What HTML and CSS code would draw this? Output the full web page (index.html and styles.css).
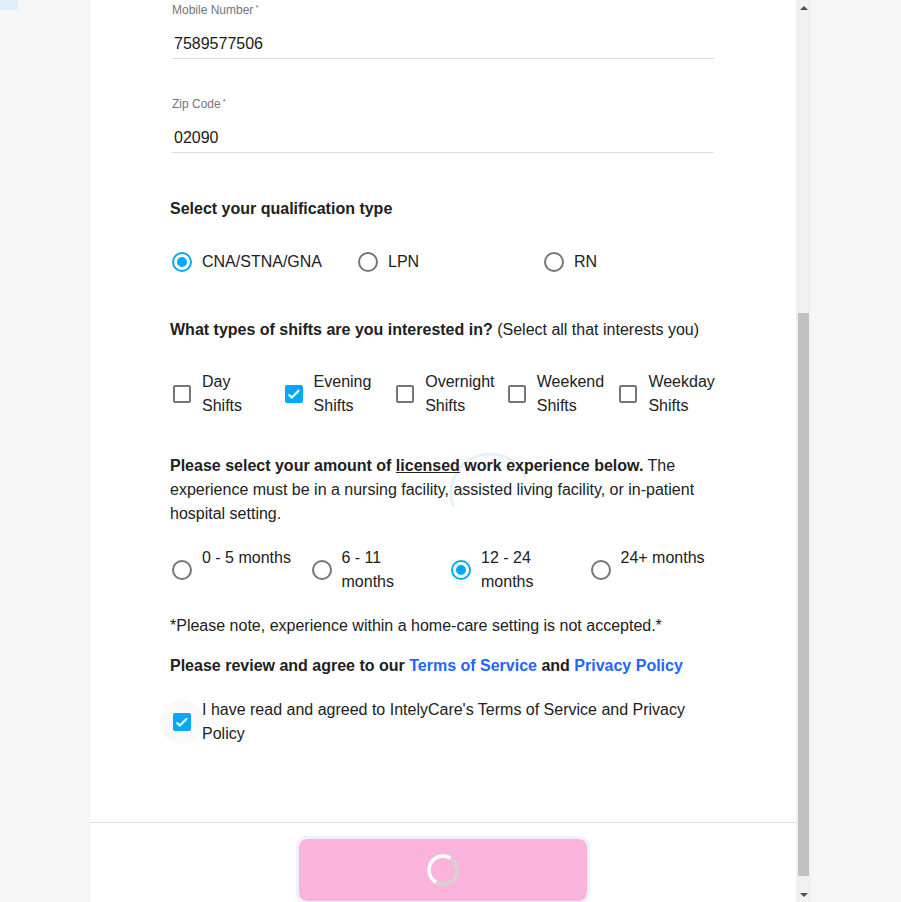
FILE: index.html
```html
<!DOCTYPE html>
<html lang="en">
<head>
<meta charset="utf-8">
<title>Sign up</title>
<link rel="stylesheet" href="styles.css">
</head>
<body>
<div class="page">
  <aside class="gutter"><div class="corner-tab"></div></aside>

  <main class="panel">
    <svg class="busy-arc" width="84" height="84" viewBox="0 0 84 84" aria-hidden="true">
      <circle cx="42" cy="42" r="39" fill="none" stroke="#e2f1fc" stroke-width="3" stroke-dasharray="120 200" transform="rotate(160 42 42)"/>
    </svg>

    <form class="form">
      <div class="content">
        <div class="field">
          <div class="field-label">Mobile Number<span class="req">*</span></div>
          <div class="field-value">7589577506</div>
        </div>
        <div class="field field-next">
          <div class="field-label">Zip Code<span class="req">*</span></div>
          <div class="field-value">02090</div>
        </div>

        <h3 class="q q-first">Select your qualification type</h3>
        <div class="radio-row">
          <label class="opt"><span class="radio on"></span><span>CNA/STNA/GNA</span></label>
          <label class="opt"><span class="radio"></span><span>LPN</span></label>
          <label class="opt"><span class="radio"></span><span>RN</span></label>
        </div>

        <h3 class="q q-shifts">What types of shifts are you interested in? <span class="normal">(Select all that interests you)</span></h3>
        <div class="shift-row">
          <label class="opt two"><span class="check"></span><span class="shift-text">Day Shifts</span></label>
          <label class="opt two"><span class="check on"><svg width="14" height="14" viewBox="0 0 14 14"><polyline points="1.6,7.4 4.8,10.6 12.2,3.2" fill="none" stroke="#fff" stroke-width="2.1"/></svg></span><span class="shift-text">Evening Shifts</span></label>
          <label class="opt two"><span class="check"></span><span class="shift-text">Overnight Shifts</span></label>
          <label class="opt two"><span class="check"></span><span class="shift-text">Weekend Shifts</span></label>
          <label class="opt two"><span class="check"></span><span class="shift-text">Weekday Shifts</span></label>
        </div>

        <p class="para"><b>Please select your amount of <u>licensed</u> work experience below.</b> The experience must be in a nursing facility, assisted living facility, or in-patient hospital setting.</p>
        <div class="exp-row">
          <label class="opt two"><span class="radio"></span><span class="exp-text">0 - 5 months</span></label>
          <label class="opt two"><span class="radio"></span><span class="exp-text">6 - 11 months</span></label>
          <label class="opt two"><span class="radio on"></span><span class="exp-text">12 - 24 months</span></label>
          <label class="opt two"><span class="radio"></span><span class="exp-text">24+ months</span></label>
        </div>

        <p class="note">*Please note, experience within a home-care setting is not accepted.*</p>
        <p class="q q-review">Please review and agree to our <a class="link" href="#">Terms of Service</a> and <a class="link" href="#">Privacy Policy</a></p>

        <label class="terms">
          <span class="terms-box"><span class="halo"></span><span class="check on"><svg width="14" height="14" viewBox="0 0 14 14"><polyline points="1.6,7.4 4.8,10.6 12.2,3.2" fill="none" stroke="#fff" stroke-width="2.1"/></svg></span></span>
          <span class="terms-text">I have read and agreed to IntelyCare's Terms of Service and Privacy Policy</span>
        </label>
      </div>
    </form>

    <div class="footer">
      <button class="submit" type="button" aria-label="Loading">
        <svg width="34" height="34" viewBox="0 0 34 34" aria-hidden="true">
          <circle cx="17" cy="17" r="14" fill="none" stroke="#d4d4d4" stroke-width="3.5"/>
          <circle cx="17" cy="17" r="14" fill="none" stroke="#ffffff" stroke-width="3.5" stroke-dasharray="44 44" transform="rotate(120 17 17)"/>
        </svg>
      </button>
    </div>
  </main>

  <div class="scrollbar">
    <div class="sb-btn"><span class="tri up"></span></div>
    <div class="sb-track"><div class="sb-thumb"></div></div>
    <div class="sb-btn"><span class="tri down"></span></div>
  </div>

  <div class="right-space"></div>
</div>
</body>
</html>
```
FILE: styles.css
```css
* { box-sizing: border-box; }

html, body {
  margin: 0;
  padding: 0;
  height: 100%;
  overflow: hidden;
}

body {
  font-family: "Liberation Sans", Arial, sans-serif;
  color: #212121;
  background: #f6f6f6;
  font-size: 16px;
}

.page {
  display: flex;
  height: 902px;
}

.gutter {
  width: 90px;
  flex: none;
}

.corner-tab {
  width: 18px;
  height: 10px;
  background: #deeef8;
}

.panel {
  width: 706px;
  flex: none;
  background: #fff;
  display: flex;
  flex-direction: column;
  position: relative;
}

.busy-arc {
  position: absolute;
  left: 358px;
  top: 451px;
  z-index: 0;
}

.form {
  height: 822px;
  margin: 0;
  padding: 3px 0 0 80px;
  position: relative;
  z-index: 1;
  flex: none;
}

.content {
  width: 558px;
}

.field {
  width: 542px;
  margin-left: 2px;
  border-bottom: 1px solid #dcdcdc;
}

.field-next {
  margin-top: 38px;
}

.field-label {
  font-size: 12px;
  line-height: 14px;
  color: #757575;
  margin-bottom: 15px;
}

.req {
  font-size: 8px;
  vertical-align: top;
  margin-left: 2px;
  line-height: 10px;
}

.field-value {
  font-size: 16px;
  line-height: 24px;
  padding: 0 0 2px 2px;
  color: #1a1a1a;
}

.q {
  font-size: 16px;
  line-height: 24px;
  font-weight: bold;
  margin: 0;
}

.q-first { margin-top: 44px; }
.q-shifts { margin-top: 44px; }
.q-review { margin-top: 16px; }

.normal { font-weight: normal; }

.link {
  color: #2266ff;
  text-decoration: none;
}

.opt {
  display: flex;
  align-items: center;
  line-height: 24px;
}

.radio-row {
  display: grid;
  grid-template-columns: 186px 186px 186px;
  margin-top: 29px;
}

.radio {
  width: 20px;
  height: 20px;
  border: 2px solid #757575;
  border-radius: 50%;
  margin: 0 10px 0 2px;
  flex: none;
  display: flex;
  align-items: center;
  justify-content: center;
}

.radio.on { border-color: #03a9f4; }

.radio.on::after {
  content: "";
  width: 10px;
  height: 10px;
  border-radius: 50%;
  background: #03a9f4;
}

.check {
  width: 18px;
  height: 18px;
  border: 2px solid #757575;
  border-radius: 2px;
  margin: 0 11px 0 3px;
  flex: none;
  display: flex;
  align-items: center;
  justify-content: center;
}

.check.on {
  background: #03a9f4;
  border-color: #03a9f4;
}

.shift-row {
  display: grid;
  grid-template-columns: repeat(5, 1fr);
  margin-top: 28px;
}

.two { height: 48px; }

.shift-text { width: min-content; }

.para {
  margin: 36px 0 0;
  line-height: 24px;
}

.exp-row {
  display: grid;
  grid-template-columns: repeat(4, 1fr);
  margin-top: 20px;
}

.exp-text {
  max-width: 94px;
  align-self: flex-start;
}

.note {
  margin: 20px 0 0;
  line-height: 24px;
}

.terms {
  display: flex;
  align-items: center;
  margin-top: 20px;
  line-height: 24px;
}

.terms-box {
  position: relative;
  display: flex;
  flex: none;
}

.halo {
  position: absolute;
  width: 44px;
  height: 44px;
  left: -10px;
  top: -13px;
  border-radius: 50%;
  background: rgba(0, 0, 0, 0.025);
}

.terms-box .check { position: relative; }

.terms-text { flex: 1; }

.footer {
  border-top: 1px solid #e0e0e0;
  display: flex;
  justify-content: center;
  padding-top: 13px;
}

.submit {
  width: 294px;
  height: 68px;
  flex: none;
  border: 3px solid #eef0fc;
  border-radius: 11px;
  background: #fab4dc;
  background-clip: padding-box;
  display: flex;
  align-items: center;
  justify-content: center;
  padding: 0;
}

.scrollbar {
  width: 15px;
  flex: none;
  background: #f1f1f1;
  display: flex;
  flex-direction: column;
}

.sb-btn {
  height: 15px;
  flex: none;
  display: flex;
  align-items: center;
  justify-content: center;
}

.tri {
  width: 0;
  height: 0;
  border-left: 4px solid transparent;
  border-right: 4px solid transparent;
}

.tri.up { border-bottom: 4px solid #505050; }
.tri.down { border-top: 4px solid #505050; }

.sb-track {
  flex: 1;
  padding: 298px 2px 0;
}

.sb-thumb {
  height: 563px;
  background: #c1c1c1;
}

.right-space { flex: 1; }
```
